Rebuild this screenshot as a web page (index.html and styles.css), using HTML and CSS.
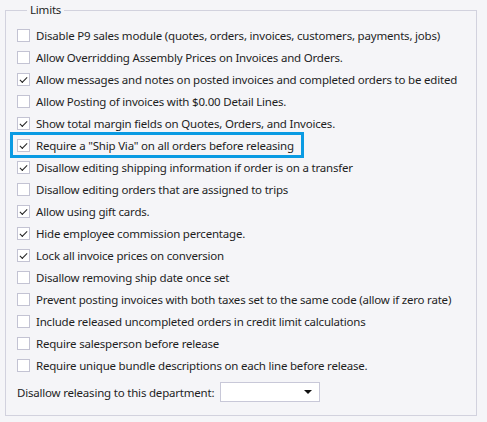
FILE: index.html
```html
<!DOCTYPE html>
<html lang="en">

<head>
    <meta charset="UTF-8">
    <title>Limits</title>
    <link rel="stylesheet" href="styles.css">
</head>

<body>
    <fieldset class="group">
        <legend>Limits</legend>
        <div class="row"><span class="box"></span>Disable P9 sales module (quotes, orders, invoices, customers, payments, jobs)</div>
        <div class="row"><span class="box"></span>Allow Overridding Assembly Prices on Invoices and Orders.</div>
        <div class="row"><span class="box checked"></span>Allow messages and notes on posted invoices and completed orders to be edited</div>
        <div class="row"><span class="box"></span>Allow Posting of invoices with $0.00 Detail Lines.</div>
        <div class="row"><span class="box checked"></span>Show total margin fields on Quotes, Orders, and Invoices.</div>
        <div class="row"><span class="focus"><span class="box checked"></span><span>Require a "Ship Via" on all orders before releasing</span></span></div>
        <div class="row"><span class="box checked"></span>Disallow editing shipping information if order is on a transfer</div>
        <div class="row"><span class="box"></span>Disallow editing orders that are assigned to trips</div>
        <div class="row"><span class="box checked"></span>Allow using gift cards.</div>
        <div class="row"><span class="box checked"></span>Hide employee commission percentage.</div>
        <div class="row"><span class="box checked"></span>Lock all invoice prices on conversion</div>
        <div class="row"><span class="box"></span>Disallow removing ship date once set</div>
        <div class="row"><span class="box"></span>Prevent posting invoices with both taxes set to the same code (allow if zero rate)</div>
        <div class="row"><span class="box"></span>Include released uncompleted orders in credit limit calculations</div>
        <div class="row"><span class="box"></span>Require salesperson before release</div>
        <div class="row"><span class="box"></span>Require unique bundle descriptions on each line before release.</div>
        <div class="row dept">
            <span>Disallow releasing to this department:</span>
            <span class="combo"><span class="arrow"></span></span>
        </div>
    </fieldset>
</body>

</html>
```

FILE: styles.css
```css
body {
    margin: 0;
    background-color: #f5f5f8;
    font-family: 'Noto Sans', 'Open Sans', sans-serif;
    font-size: 11.5px;
    letter-spacing: -0.2px;
    color: #1e1e1e;
    width: 487px;
    height: 422px;
    overflow: hidden;
}

.group {
    box-sizing: border-box;
    min-width: 0;
    margin: 4px 0 0 5px;
    width: 472px;
    height: 412px;
    padding: 8px 10px 0 11px;
    border: 1px solid #d2d2de;
}

legend {
    padding: 0 3px;
    margin-left: 10px;
    line-height: 12px;
}

.row {
    display: flex;
    align-items: center;
    height: 22px;
    white-space: nowrap;
}

.box {
    width: 11px;
    height: 11px;
    border: 1px solid #c3c3d3;
    background-color: #fff;
    margin-right: 6px;
    flex: none;
    position: relative;
}

.box.checked::after {
    content: '';
    position: absolute;
    left: 2px;
    top: 1px;
    width: 6px;
    height: 3px;
    border-left: 1.6px solid #222;
    border-bottom: 1.6px solid #222;
    transform: translate(0, 2px) rotate(-45deg) scaleX(1.05);
    transform-origin: center;
}

.focus {
    display: inline-flex;
    align-items: center;
    flex: none;
    height: 22px;
    margin-left: -5px;
    padding: 0 8px 0 5px;
    outline: 3px solid #0a9be3;
    outline-offset: -1px;
}

.dept {
    margin-top: 5px;
}

.combo {
    width: 98px;
    height: 18px;
    margin-left: 6px;
    border: 1px solid #c8c8d8;
    background-color: #fff;
    position: relative;
}

.arrow {
    position: absolute;
    right: 7px;
    top: 7px;
    border-left: 4px solid transparent;
    border-right: 4px solid transparent;
    border-top: 4px solid #111;
}
```
